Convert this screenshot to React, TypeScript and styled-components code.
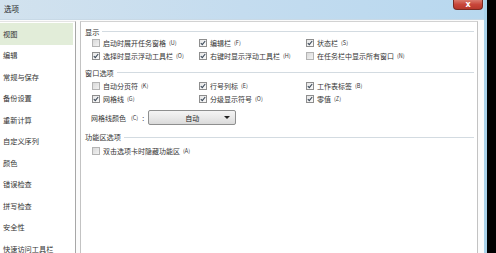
import styled, { createGlobalStyle } from "styled-components";

const FONT = `"Noto Sans CJK SC", "Noto Sans", sans-serif`;

const GlobalStyle = createGlobalStyle`
  html, body {
    margin: 0;
    padding: 0;
    background: #000;
  }
  body {
    width: 496px;
    height: 253px;
    overflow: hidden;
    font-family: ${FONT};
  }
`;

const Window = styled.div`
  width: 484px;
  height: 253px;
  border-right: 3px solid #a9d2ea;
  background: #fff;
  display: flex;
  flex-direction: column;
  overflow: hidden;
`;

const TitleBar = styled.div`
  height: 19px;
  flex-shrink: 0;
  display: flex;
  align-items: center;
  justify-content: space-between;
  padding-left: 4px;
  background: linear-gradient(90deg, #d2e2ee 0%, #c4dcef 50%, #b8d8ef 100%);
  position: relative;
`;

const Title = styled.span`
  font-size: 7.5px;
  color: #1e1e1e;
  margin-top: -2px;
`;

const CloseButton = styled.div`
  position: absolute;
  top: 0;
  right: 1px;
  width: 30px;
  height: 10px;
  border-radius: 0 0 4px 4px;
  background: linear-gradient(180deg, #d9796c 0%, #c8463a 50%, #b7382c 100%);
  border: 1px solid #7a2a22;
  border-top: none;
  box-sizing: border-box;
  color: #fff;
  font-size: 8px;
  line-height: 9px;
  text-align: center;
  font-family: "DejaVu Sans", sans-serif;
  font-weight: bold;
`;

const Client = styled.div`
  flex: 1;
  display: flex;
  padding-top: 1px;
  background: #fbfbfb;
  border-top: 1px solid #c8d9e6;
`;

const Nav = styled.div`
  width: 75px;
  flex-shrink: 0;
  border-right: 1px solid #a7a7a7;
  border-top: 1px solid #e4e4e4;
  background: #fff;
  display: flex;
  flex-direction: column;
  padding-top: 1px;
`;

const NavItem = styled.div<{ $active?: boolean }>`
  height: 21.5px;
  flex-shrink: 0;
  display: flex;
  align-items: center;
  padding-left: 3px;
  margin-right: 2px;
  font-size: 7.2px;
  color: #333;
  background: ${(p) => (p.$active ? "#e2edd9" : "transparent")};
`;

const Content = styled.div`
  flex: 1;
  margin-left: 4px;
  margin-right: 6px;
  border-left: 1px solid #c3c3c3;
  border-top: 1px solid #d2d2d2;
  border-right: 1px solid #c3c3c3;
  background: #fff;
  padding: 4px 4px 0 4px;
  display: flex;
  flex-direction: column;
`;

const GroupHeader = styled.div<{ $gap?: number }>`
  display: flex;
  align-items: center;
  gap: 3px;
  height: 11px;
  flex-shrink: 0;
  margin-top: ${(p) => p.$gap ?? 0}px;
  font-size: 7.2px;
  color: #333;
  margin-right: -1px;

  &::after {
    content: "";
    flex: 1;
    height: 1px;
    background: #d3dbe1;
  }
`;

const Grid = styled.div<{ $gap?: number }>`
  display: grid;
  grid-template-columns: 107px 107px 1fr;
  padding-left: 7px;
  margin-top: ${(p) => p.$gap ?? 0}px;
`;

const Option = styled.label`
  display: flex;
  align-items: center;
  gap: 2px;
  height: 12.5px;
  font-size: 7px;
  color: #333;
  white-space: nowrap;
`;

const Box = styled.span<{ $checked?: boolean }>`
  width: 8px;
  height: 8px;
  box-sizing: border-box;
  border: 1px solid ${(p) => (p.$checked ? "#8e8e8e" : "#b4b4b4")};
  background: ${(p) =>
    p.$checked
      ? "linear-gradient(135deg, #e6e6e6, #fafafa)"
      : "linear-gradient(135deg, #d9d9d9, #f2f2f2)"};
  display: inline-flex;
  align-items: center;
  justify-content: center;
  margin-right: 1px;
  flex-shrink: 0;
`;

const Key = styled.span`
  font-size: 5.5px;
  margin-left: 1px;
`;

const ColorRow = styled.div`
  display: flex;
  align-items: center;
  gap: 4px;
  height: 17px;
  flex-shrink: 0;
  padding-left: 6px;
  margin-top: 4px;
  font-size: 7px;
  color: #333;
`;

const Select = styled.div`
  width: 88px;
  height: 15px;
  box-sizing: border-box;
  border: 1px solid #8e8f8f;
  border-radius: 2px;
  background: linear-gradient(180deg, #f4f4f4 0%, #e9e9e9 50%, #dadada 100%);
  display: flex;
  align-items: center;
  position: relative;
  font-size: 7px;
  color: #222;
  justify-content: center;
`;

const Arrow = styled.span`
  position: absolute;
  right: 5px;
  top: 5px;
  width: 0;
  height: 0;
  border-left: 3px solid transparent;
  border-right: 3px solid transparent;
  border-top: 3px solid #222;
`;

const Single = styled.div`
  padding-left: 7px;
  margin-top: 2px;
`;

function Check({ checked }: { checked?: boolean }) {
  return (
    <Box $checked={checked}>
      {checked && (
        <svg width="6" height="6" viewBox="0 0 6 6">
          <path d="M0.8 3.2 L2.3 4.7 L5.2 1" stroke="#3c4a5a" strokeWidth="1.1" fill="none" />
        </svg>
      )}
    </Box>
  );
}

type Opt = { label: string; key: string; checked?: boolean };

const displayOpts: Opt[] = [
  { label: "启动时展开任务窗格", key: "(U)" },
  { label: "编辑栏", key: "(F)", checked: true },
  { label: "状态栏", key: "(S)", checked: true },
  { label: "选择时显示浮动工具栏", key: "(O)", checked: true },
  { label: "右键时显示浮动工具栏", key: "(H)", checked: true },
  { label: "在任务栏中显示所有窗口", key: "(N)" },
];

const windowOpts: Opt[] = [
  { label: "自动分页符", key: "(K)" },
  { label: "行号列标", key: "(E)", checked: true },
  { label: "工作表标签", key: "(B)", checked: true },
  { label: "网格线", key: "(G)", checked: true },
  { label: "分级显示符号", key: "(O)", checked: true },
  { label: "零值", key: "(Z)", checked: true },
];

const navItems = [
  "视图",
  "编辑",
  "常规与保存",
  "备份设置",
  "重新计算",
  "自定义序列",
  "颜色",
  "错误检查",
  "拼写检查",
  "安全性",
  "快速访问工具栏",
];

function OptionItem({ opt }: { opt: Opt }) {
  return (
    <Option>
      <Check checked={opt.checked} />
      {opt.label}
      <Key>{opt.key}</Key>
    </Option>
  );
}

export default function App() {
  return (
    <>
      <GlobalStyle />
      <Window>
        <TitleBar>
          <Title>选项</Title>
          <CloseButton>x</CloseButton>
        </TitleBar>
        <Client>
          <Nav>
            {navItems.map((item, i) => (
              <NavItem key={item} $active={i === 0}>
                {item}
              </NavItem>
            ))}
          </Nav>
          <Content>
            <GroupHeader>显示</GroupHeader>
            <Grid>
              {displayOpts.map((o) => (
                <OptionItem key={o.label} opt={o} />
              ))}
            </Grid>
            <GroupHeader $gap={5}>窗口选项</GroupHeader>
            <Grid $gap={2}>
              {windowOpts.map((o) => (
                <OptionItem key={o.label} opt={o} />
              ))}
            </Grid>
            <ColorRow>
              网格线颜色<Key>(C)</Key>:
              <Select>
                自动
                <Arrow />
              </Select>
            </ColorRow>
            <GroupHeader $gap={5.5}>功能区选项</GroupHeader>
            <Single>
              <OptionItem opt={{ label: "双击选项卡时隐藏功能区", key: "(A)" }} />
            </Single>
          </Content>
        </Client>
      </Window>
    </>
  );
}
